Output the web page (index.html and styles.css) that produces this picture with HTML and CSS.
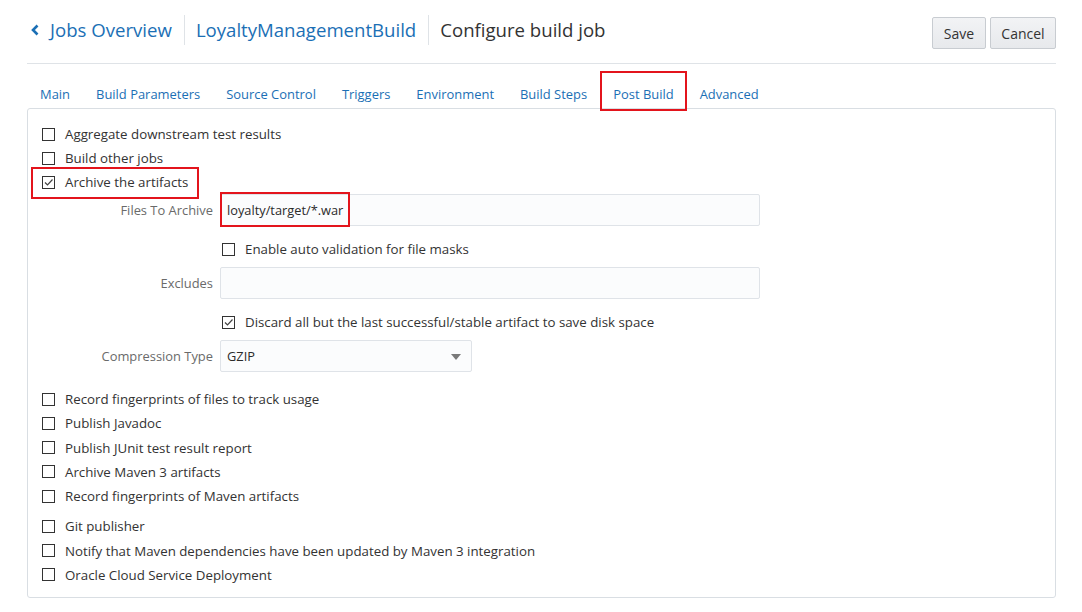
FILE: index.html
```html
<!DOCTYPE html>
<html>
<head>
<meta charset="utf-8">
<link rel="stylesheet" href="styles.css">
</head>
<body>
<div class="page">
  <header class="header">
    <div class="crumbs">
      <a class="crumb back"><svg class="chev" width="10" height="12" viewBox="0 0 10 12"><path d="M7.5 1.5 L3 6 L7.5 10.5" fill="none" stroke="#1b6fb5" stroke-width="2.6"/></svg>Jobs Overview</a>
      <span class="sep"></span>
      <a class="crumb">LoyaltyManagementBuild</a>
      <span class="sep"></span>
      <span class="crumb current">Configure build job</span>
    </div>
    <div class="actions">
      <button class="btn btn-save">Save</button>
      <button class="btn btn-cancel">Cancel</button>
    </div>
  </header>

  <nav class="tabs">
    <a class="tab">Main</a>
    <a class="tab">Build Parameters</a>
    <a class="tab">Source Control</a>
    <a class="tab">Triggers</a>
    <a class="tab">Environment</a>
    <a class="tab">Build Steps</a>
    <a class="tab active">Post Build</a>
    <a class="tab">Advanced</a>
  </nav>

  <section class="panel">
    <div class="row"><span class="cb"></span><span class="lbl">Aggregate downstream test results</span></div>
    <div class="row"><span class="cb"></span><span class="lbl">Build other jobs</span></div>
    <div class="row highlight-row"><span class="cb checked"><svg width="11" height="11" viewBox="0 0 11 11"><path d="M2 5.5 L4.5 8 L9.5 2.5" fill="none" stroke="#444" stroke-width="1.2"/></svg></span><span class="lbl">Archive the artifacts</span><span class="mark mark-archive"></span></div>

    <div class="subform">
      <label class="flabel">Files To Archive</label>
      <div class="field">
        <div class="input wide">loyalty/target/*.war</div>
        <span class="mark mark-input"></span>
      </div>

      <div class="fcheck"><span class="cb"></span><span class="lbl">Enable auto validation for file masks</span></div>

      <label class="flabel">Excludes</label>
      <div class="field"><div class="input wide"></div></div>

      <div class="fcheck"><span class="cb checked"><svg width="11" height="11" viewBox="0 0 11 11"><path d="M2 5.5 L4.5 8 L9.5 2.5" fill="none" stroke="#444" stroke-width="1.2"/></svg></span><span class="lbl">Discard all but the last successful/stable artifact to save disk space</span></div>

      <label class="flabel">Compression Type</label>
      <div class="field"><div class="input select">GZIP<span class="caret"></span></div></div>
    </div>

    <div class="group group-lower">
      <div class="row"><span class="cb"></span><span class="lbl">Record fingerprints of files to track usage</span></div>
      <div class="row"><span class="cb"></span><span class="lbl">Publish Javadoc</span></div>
      <div class="row"><span class="cb"></span><span class="lbl">Publish JUnit test result report</span></div>
      <div class="row"><span class="cb"></span><span class="lbl">Archive Maven 3 artifacts</span></div>
      <div class="row"><span class="cb"></span><span class="lbl">Record fingerprints of Maven artifacts</span></div>
    </div>
    <div class="group group-last">
      <div class="row"><span class="cb"></span><span class="lbl">Git publisher</span></div>
      <div class="row"><span class="cb"></span><span class="lbl">Notify that Maven dependencies have been updated by Maven 3 integration</span></div>
      <div class="row"><span class="cb"></span><span class="lbl">Oracle Cloud Service Deployment</span></div>
    </div>
  </section>
</div>
</body>
</html>
```

FILE: styles.css
```css
* { box-sizing: border-box; }
html, body { margin: 0; padding: 0; background: #fff; }
body {
  font-family: "Open Sans", "Noto Sans", "Liberation Sans", sans-serif;
  color: #333;
  font-size: 13.3px;
}
.page { padding: 0 26px 0 27px; }

.header {
  display: flex;
  justify-content: space-between;
  align-items: flex-start;
  height: 64px;
  border-bottom: 1px solid #dfe3e7;
}
.crumbs {
  display: flex;
  align-items: center;
  height: 30px;
  margin-top: 15px;
}
.crumb {
  font-size: 18.6px;
  color: #1b6fb5;
  text-decoration: none;
  display: flex;
  align-items: center;
  line-height: 30px;
}
.crumb.back { padding-left: 3px; }
.chev { margin-right: 10px; }
.crumb.current { color: #333; }
.sep {
  width: 1px;
  height: 30px;
  background: #dfe3e7;
  margin: 0 11px 0 12px;
}
.actions { display: flex; gap: 4px; margin-top: 17px; }
.btn {
  height: 32px;
  font-family: inherit;
  font-size: 14px;
  color: #333;
  background: linear-gradient(#f2f3f5, #e7e9ec);
  border: 1px solid #c8ccd1;
  border-radius: 2px;
  padding: 0;
}
.btn-save { width: 54px; }
.btn-cancel { width: 66px; }

.tabs {
  display: flex;
  height: 44px;
  align-items: flex-end;
}
.tab {
  position: relative;
  font-size: 12.95px;
  color: #1b6fb5;
  padding: 0 13px 4px;
  line-height: 20px;
}
.tab.active::after {
  content: "";
  position: absolute;
  left: 0; right: 0; top: -13px; bottom: -3px;
  border: 2px solid #e3141c;
}

.panel {
  border: 1px solid #d9dee3;
  border-radius: 3px;
  padding: 13px 14px 11px;
  height: 490px;
}
.row {
  position: relative;
  display: flex;
  align-items: center;
  height: 24px;
}
.group .row { height: 24.25px; }
.cb {
  width: 13px;
  height: 13px;
  border: 1px solid #333;
  background: #fff;
  margin-right: 10px;
  display: flex;
  align-items: center;
  justify-content: center;
  flex: none;
}
.lbl { white-space: nowrap; }
.mark {
  position: absolute;
  border: 2px solid #e3141c;
  pointer-events: none;
}
.mark-archive { left: -11px; top: -3px; width: 168px; height: 32px; }

.subform {
  display: grid;
  grid-template-columns: 171px 540px;
  column-gap: 7px;
  align-items: center;
}
.flabel {
  text-align: right;
  color: #6a6a6a;
  white-space: nowrap;
  font-size: 12.9px;
}
.field { position: relative; }
.input {
  height: 32px;
  background: #fbfcfd;
  border: 1px solid #dfe3e8;
  border-radius: 2px;
  padding: 0 6px;
  display: flex;
  align-items: center;
  color: #2b2b2b;
  font-size: 12.8px;
}
.input.select { width: 252px; position: relative; }
.caret {
  position: absolute;
  right: 10px;
  top: 13px;
  width: 0; height: 0;
  border-left: 5px solid transparent;
  border-right: 5px solid transparent;
  border-top: 6px solid #7a7a7a;
}
.mark-input { left: 0; top: -2px; width: 130px; height: 35px; }
.fcheck {
  grid-column: 2;
  display: flex;
  align-items: center;
  height: 24px;
  margin: 11px 0 6px 2px;
}
.group-lower { margin-top: 15px; }
.group-last { margin-top: 6px; }
```
